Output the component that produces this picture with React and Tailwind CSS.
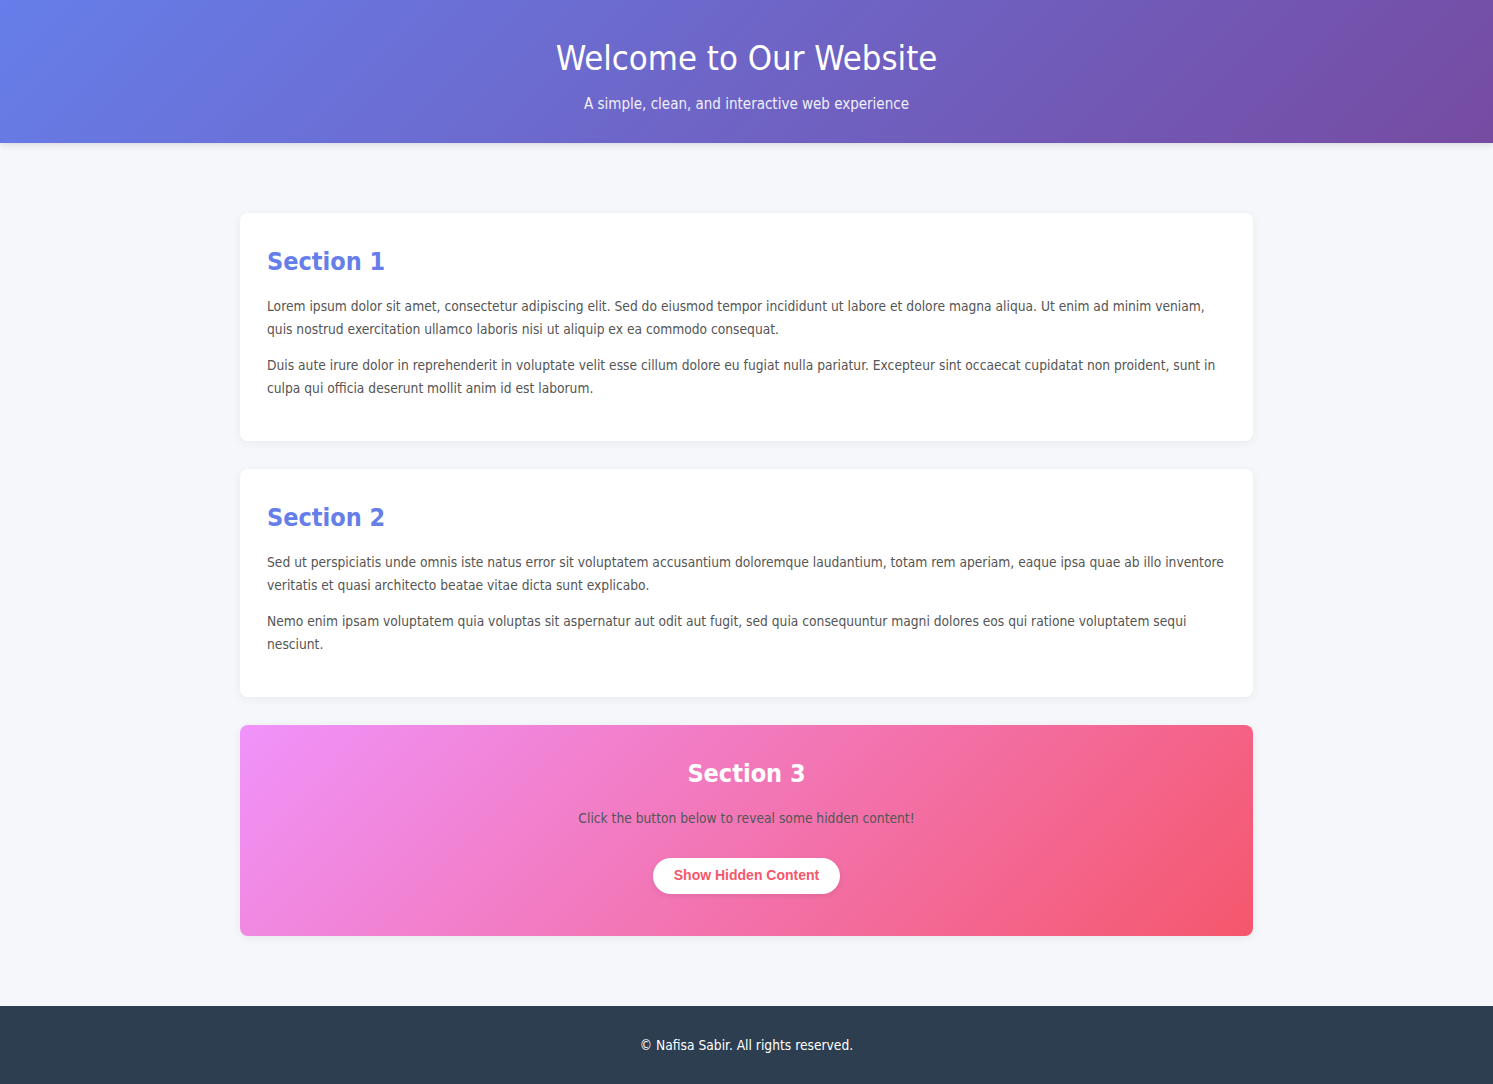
export default function App() {
  const font = { fontFamily: '"DejaVu Sans Condensed", "DejaVu Sans", sans-serif' };
  return (
    <div className="min-h-screen bg-[#f5f7fa] flex flex-col" style={font}>
      <header className="h-[143px] bg-[linear-gradient(135deg,#667eea_0%,#764ba2_100%)] text-white flex flex-col items-center shadow-[0_2px_6px_rgba(0,0,0,0.12)]">
        <h1 className="text-[34.4px] leading-[44px] mt-[36px]">Welcome to Our Website</h1>
        <p className="text-[15px] leading-[22px] mt-[13px] opacity-90">A simple, clean, and interactive web experience</p>
      </header>
      <main className="w-[1013px] mx-auto mt-[70px] mb-[70px] flex flex-col gap-[28px]">
        <section className="bg-white rounded-lg shadow-[0_2px_10px_rgba(0,0,0,0.06)] px-[27px] pt-[34px] pb-[42px]">
          <h2 className="text-[25px] leading-[30px] font-bold text-[#667eea]">Section 1</h2>
          <p className="mt-[18px] text-[13.7px] leading-[22.5px] text-[#555]">Lorem ipsum dolor sit amet, consectetur adipiscing elit. Sed do eiusmod tempor incididunt ut labore et dolore magna aliqua. Ut enim ad minim veniam, quis nostrud exercitation ullamco laboris nisi ut aliquip ex ea commodo consequat.</p>
          <p className="mt-[14px] text-[13.7px] leading-[22.5px] text-[#555]">Duis aute irure dolor in reprehenderit in voluptate velit esse cillum dolore eu fugiat nulla pariatur. Excepteur sint occaecat cupidatat non proident, sunt in culpa qui officia deserunt mollit anim id est laborum.</p>
        </section>
        <section className="bg-white rounded-lg shadow-[0_2px_10px_rgba(0,0,0,0.06)] px-[27px] pt-[34px] pb-[42px]">
          <h2 className="text-[25px] leading-[30px] font-bold text-[#667eea]">Section 2</h2>
          <p className="mt-[18px] text-[13.7px] leading-[22.5px] text-[#555]">Sed ut perspiciatis unde omnis iste natus error sit voluptatem accusantium doloremque laudantium, totam rem aperiam, eaque ipsa quae ab illo inventore veritatis et quasi architecto beatae vitae dicta sunt explicabo.</p>
          <p className="mt-[14px] text-[13.7px] leading-[22.5px] text-[#555]">Nemo enim ipsam voluptatem quia voluptas sit aspernatur aut odit aut fugit, sed quia consequuntur magni dolores eos qui ratione voluptatem sequi nesciunt.</p>
        </section>
        <section className="rounded-lg shadow-[0_2px_10px_rgba(0,0,0,0.06)] bg-[linear-gradient(135deg,#f093fb_0%,#f5576c_100%)] flex flex-col items-center pt-[34px] pb-[42px]">
          <h2 className="text-[25px] leading-[30px] font-bold text-white">Section 3</h2>
          <p className="mt-[18px] text-[13.7px] leading-[22.5px] text-[#555]">Click the button below to reveal some hidden content!</p>
          <button className="mt-[28px] h-[36px] px-[21px] rounded-full bg-white text-[#f5576c] font-bold text-[14px] shadow-[0_2px_6px_rgba(0,0,0,0.08)]" style={{ fontFamily: '"Liberation Sans", Arial, sans-serif' }}>Show Hidden Content</button>
        </section>
      </main>
      <footer className="mt-auto h-[78px] bg-[#2c3e50] text-white flex items-center justify-center text-[13.7px]">
        © Nafisa Sabir. All rights reserved.
      </footer>
    </div>
  );
}
